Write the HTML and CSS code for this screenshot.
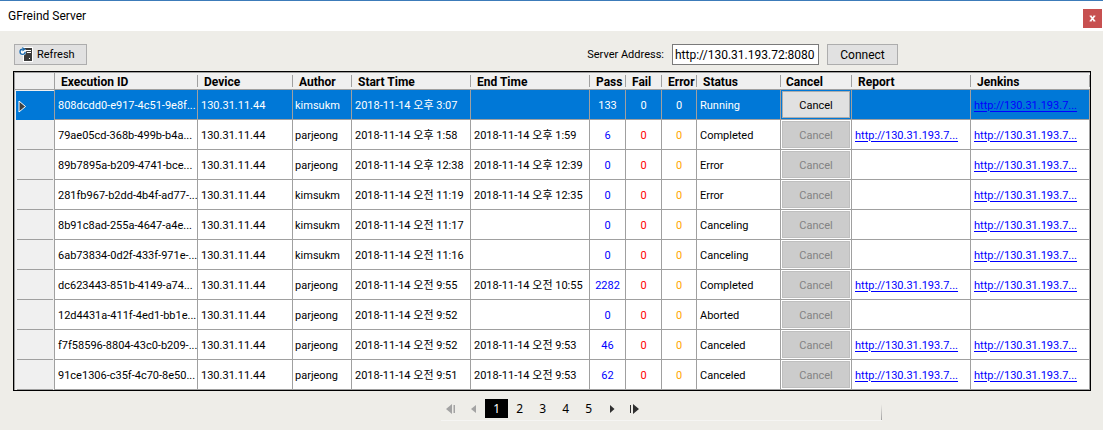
FILE: index.html
```html
<!DOCTYPE html>
<html lang="ko">
<head>
<meta charset="utf-8">
<title>GFreind Server</title>
<link rel="stylesheet" href="styles.css">
</head>
<body>
<header class="titlebar">
  <h1 class="title">GFreind Server</h1>
  <button class="close" type="button" aria-label="Close"><svg width="7" height="7" viewBox="0 0 7 7"><path d="M1.500 1l4 5M5.500 1l-4 5" stroke="#fff" stroke-width="1.7"/><path d="M.5 1h2M4.500 1h2M.5 6h2M4.500 6h2" stroke="#fff" stroke-width=".8"/></svg></button>
</header>
<main>
  <div class="toolbar">
    <button class="btn refresh" type="button">
      <svg width="14" height="15" viewBox="0 0 14 15"><path d="M4 0h10v15H4z" fill="#fff"/><path d="M5 1h8v13H5z" fill="#3b3b3b"/><path d="M7 3h5v1H7zM8 5h4v1H8z" fill="#fff"/><path d="M10 11h1v1h-1z" fill="#fff"/><circle cx="3.6" cy="4.8" r="3.6" fill="#fff"/><path d="M3.6 2.2A2.6 2.6 0 1 0 6.2 4.8" fill="none" stroke="#1b69ab" stroke-width="1.4"/><path d="M3.4 0l3.4 2.2-3.4 2.2z" fill="#1b69ab"/></svg>
      <span>Refresh</span>
    </button>
    <form class="server">
      <label for="address">Server Address:</label>
      <input class="address" id="address" type="text" value="http://130.31.193.72:8080">
      <button class="btn connect" type="button">Connect</button>
    </form>
  </div>

  <div class="grid">
    <table>
      <colgroup><col class="c-mark"><col class="c-id"><col class="c-device"><col class="c-author"><col class="c-time"><col class="c-time"><col class="c-pass"><col class="c-pass"><col class="c-error"><col class="c-status"><col class="c-cancel"><col class="c-link"><col class="c-link"></colgroup>
      <thead>
        <tr><td class="corner"></td><th>Execution ID</th><th>Device</th><th>Author</th><th>Start Time</th><th>End Time</th><th>Pass</th><th>Fail</th><th>Error</th><th>Status</th><th class="flush">Cancel</th><th>Report</th><th>Jenkins</th></tr>
      </thead>
      <tbody>
        <tr class="selected"><td class="mark"><svg width="9" height="13" viewBox="0 0 9 13"><path d="M1 1l6.500 5.500L1 12z" fill="#404040" stroke="#fff"/></svg></td><td>808dcdd0-e917-4c51-9e8f...</td><td>130.31.11.44</td><td class="author">kimsukm</td><td>2018-11-14 오후 3:07</td><td></td><td class="num pass">133</td><td class="num fail">0</td><td class="num err">0</td><td>Running</td><td class="act"><button type="button">Cancel</button></td><td></td><td><a href="#">http://130.31.193.7...</a></td></tr>
        <tr><td class="mark"></td><td>79ae05cd-368b-499b-b4a...</td><td>130.31.11.44</td><td class="author">parjeong</td><td>2018-11-14 오후 1:58</td><td>2018-11-14 오후 1:59</td><td class="num pass">6</td><td class="num fail">0</td><td class="num err">0</td><td>Completed</td><td class="act"><button type="button" disabled>Cancel</button></td><td><a href="#">http://130.31.193.7...</a></td><td><a href="#">http://130.31.193.7...</a></td></tr>
        <tr><td class="mark"></td><td>89b7895a-b209-4741-bce...</td><td>130.31.11.44</td><td class="author">parjeong</td><td>2018-11-14 오후 12:38</td><td>2018-11-14 오후 12:39</td><td class="num pass">0</td><td class="num fail">0</td><td class="num err">0</td><td>Error</td><td class="act"><button type="button" disabled>Cancel</button></td><td></td><td><a href="#">http://130.31.193.7...</a></td></tr>
        <tr><td class="mark"></td><td>281fb967-b2dd-4b4f-ad77-...</td><td>130.31.11.44</td><td class="author">kimsukm</td><td>2018-11-14 오전 11:19</td><td>2018-11-14 오후 12:35</td><td class="num pass">0</td><td class="num fail">0</td><td class="num err">0</td><td>Error</td><td class="act"><button type="button" disabled>Cancel</button></td><td></td><td><a href="#">http://130.31.193.7...</a></td></tr>
        <tr><td class="mark"></td><td>8b91c8ad-255a-4647-a4e...</td><td>130.31.11.44</td><td class="author">kimsukm</td><td>2018-11-14 오전 11:17</td><td></td><td class="num pass">0</td><td class="num fail">0</td><td class="num err">0</td><td>Canceling</td><td class="act"><button type="button" disabled>Cancel</button></td><td></td><td><a href="#">http://130.31.193.7...</a></td></tr>
        <tr><td class="mark"></td><td>6ab73834-0d2f-433f-971e-...</td><td>130.31.11.44</td><td class="author">kimsukm</td><td>2018-11-14 오전 11:16</td><td></td><td class="num pass">0</td><td class="num fail">0</td><td class="num err">0</td><td>Canceling</td><td class="act"><button type="button" disabled>Cancel</button></td><td></td><td><a href="#">http://130.31.193.7...</a></td></tr>
        <tr><td class="mark"></td><td>dc623443-851b-4149-a74...</td><td>130.31.11.44</td><td class="author">parjeong</td><td>2018-11-14 오전 9:55</td><td>2018-11-14 오전 10:55</td><td class="num pass">2282</td><td class="num fail">0</td><td class="num err">0</td><td>Completed</td><td class="act"><button type="button" disabled>Cancel</button></td><td><a href="#">http://130.31.193.7...</a></td><td><a href="#">http://130.31.193.7...</a></td></tr>
        <tr><td class="mark"></td><td>12d4431a-411f-4ed1-bb1e...</td><td>130.31.11.44</td><td class="author">parjeong</td><td>2018-11-14 오전 9:52</td><td></td><td class="num pass">0</td><td class="num fail">0</td><td class="num err">0</td><td>Aborted</td><td class="act"><button type="button" disabled>Cancel</button></td><td></td><td></td></tr>
        <tr><td class="mark"></td><td>f7f58596-8804-43c0-b209-...</td><td>130.31.11.44</td><td class="author">parjeong</td><td>2018-11-14 오전 9:52</td><td>2018-11-14 오전 9:53</td><td class="num pass">46</td><td class="num fail">0</td><td class="num err">0</td><td>Canceled</td><td class="act"><button type="button" disabled>Cancel</button></td><td><a href="#">http://130.31.193.7...</a></td><td><a href="#">http://130.31.193.7...</a></td></tr>
        <tr><td class="mark"></td><td>91ce1306-c35f-4c70-8e50...</td><td>130.31.11.44</td><td class="author">parjeong</td><td>2018-11-14 오전 9:51</td><td>2018-11-14 오전 9:53</td><td class="num pass">62</td><td class="num fail">0</td><td class="num err">0</td><td>Canceled</td><td class="act"><button type="button" disabled>Cancel</button></td><td><a href="#">http://130.31.193.7...</a></td><td><a href="#">http://130.31.193.7...</a></td></tr>
      </tbody>
    </table>
  </div>

  <nav class="pager" aria-label="Pages">
    <button type="button" aria-label="First page" disabled><svg width="11" height="10" viewBox="0 0 11 10"><path d="M7 0v10L1 5zM8.500 1h1.500v8H8.500z" fill="#a3a3a3"/></svg></button>
    <button type="button" aria-label="Previous page" disabled><svg width="11" height="10" viewBox="0 0 11 10"><path d="M8 1v8L3 5z" fill="#a3a3a3"/></svg></button>
    <button type="button" class="current" aria-current="page">1</button>
    <button type="button">2</button>
    <button type="button">3</button>
    <button type="button">4</button>
    <button type="button">5</button>
    <button type="button" aria-label="Next page"><svg width="11" height="10" viewBox="0 0 11 10"><path d="M4 1v8l4.500-4z" fill="#303030"/></svg></button>
    <button type="button" aria-label="Last page"><svg width="11" height="10" viewBox="0 0 11 10"><path d="M4 0v10l6-5zM1 1h1v8H1z" fill="#303030"/></svg></button>
  </nav>
</main>
</body>
</html>
```
FILE: styles.css
```css
* { box-sizing: border-box; }

body {
  margin: 0;
  background: #eeede8;
  color: #000;
  font: 11px/14px Roboto, "Noto Sans CJK KR", sans-serif;
}

button, input { font: inherit; color: inherit; }
svg { display: block; }

.titlebar {
  display: flex;
  align-items: center;
  justify-content: space-between;
  height: 31px;
  padding: 4px 1px 0 8px;
  border-top: 1px solid #3c7bb9;
  background: #fff;
}

.title {
  margin: 0;
  padding-bottom: 4px;
  font-size: 12px;
  font-weight: 400;
  line-height: 16px;
}

.close {
  display: flex;
  align-items: center;
  justify-content: center;
  width: 19px;
  height: 19px;
  padding: 0;
  border: 0;
  background: #c75050;
}

.toolbar {
  display: flex;
  justify-content: space-between;
  padding: 12px 205px 6px 14px;
  font-size: 12px;
}

.btn {
  height: 21px;
  padding: 2px 0 0;
  border: 1px solid #adadad;
  background: #e1e1e1;
}

.refresh {
  display: flex;
  align-items: center;
  gap: 4px;
  width: 73px;
  margin-top: 1px;
  padding: 0 0 0 4px;
  font-size: 11px;
}

.connect { width: 71px; }

.server {
  display: flex;
  align-items: center;
  gap: 8px;
}

.server label {
  padding-top: 2px;
  font-size: 11px;
}

.address {
  width: 147px;
  height: 21px;
  padding: 1px 2px 0;
  border: 1px solid #7a7a7a;
  background: #fff;
}

.grid {
  margin: 0 12px 0 13px;
  border: 1px solid #000;
}

table {
  width: 100%;
  table-layout: fixed;
  border-collapse: separate;
  border-spacing: 0;
  border: solid #a0a0a0;
  border-width: 1px 0 0 1px;
  background: #fff;
}

.c-mark { width: 40px; }
.c-id { width: 143px; }
.c-device { width: 95px; }
.c-author { width: 59px; }
.c-time, .c-link { width: 119px; }
.c-pass { width: 36px; }
.c-error { width: 35px; }
.c-status { width: 84px; }
.c-cancel { width: 71px; }

th, td {
  padding: 2px 0 0 3px;
  border: solid #a0a0a0;
  border-width: 0 1px 1px 0;
  overflow: hidden;
  text-align: left;
  white-space: nowrap;
}

th, .corner {
  height: 17px;
  background: #f0f0f0;
}

th {
  padding-left: 6px;
  border-right: 0;
  background: linear-gradient(#a0a0a0, #a0a0a0) right center / 1px 12px no-repeat #f0f0f0;
  font-size: 12px;
  line-height: 14px;
}

th.flush { padding-left: 5px; }
tbody td { height: 30px; }

.mark {
  border-bottom: 0;
  background: linear-gradient(#a0a0a0, #a0a0a0) center bottom / 36px 1px no-repeat #f0f0f0;
}

td.author { padding-left: 2px; }
td.num { padding-left: 0; text-align: center; }
.pass { color: #00f; }
.fail { color: #f00; }
.err { color: #ffa500; }
a { color: #00f; text-underline-offset: 2px; }

.selected td { background: #0078d7; color: #fff; }
.selected .mark { box-shadow: inset 1px 1px #f0f0f0; }

td.act { padding: 1px; }

.act button {
  display: block;
  width: 100%;
  height: 27px;
  padding: 2px 0 0;
  border: 1px solid #adadad;
  background: #e1e1e1;
  color: #000;
}

.act button:disabled {
  border-color: #bfbfbf;
  background: #ccc;
  color: #838383;
}

.pager {
  display: flex;
  align-items: center;
  width: 40%;
  height: 22px;
  margin: 8px 0 0 40%;
  border-bottom: 1px solid #f5f5f3;
  background: linear-gradient(#eeede8, #a0a0a0) right bottom / 1px 16px no-repeat;
}

.pager button {
  display: flex;
  align-items: center;
  justify-content: center;
  width: 23px;
  height: 19px;
  margin-bottom: 2px;
  padding: 0;
  border: 0;
  background: none;
  font: 12px/16px "Noto Sans", sans-serif;
}

.pager button:first-child {
  width: 21px;
  padding-right: 2px;
}

.pager .current { background: #000; color: #fff; }
```
